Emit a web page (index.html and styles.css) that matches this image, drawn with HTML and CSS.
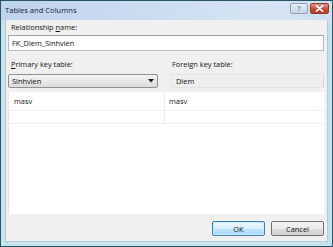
FILE: index.html
```html
<!DOCTYPE html>
<html>
<head>
<meta charset="utf-8">
<link rel="stylesheet" href="styles.css">
</head>
<body>
<div class="window">
  <div class="titlebar">
    <span class="title">Tables and Columns</span>
    <div class="caption-btns">
      <span class="cbtn help">?</span>
      <span class="cbtn close"><svg width="9" height="7" viewBox="0 0 9 7"><path d="M1.5 0.8 L7.5 6.2 M7.5 0.8 L1.5 6.2" stroke="#fff" stroke-width="1.7" stroke-linecap="round"/></svg></span>
    </div>
  </div>
  <div class="client">
    <div class="label">Relationship <u>n</u>ame:</div>
    <div class="textbox">FK_Diem_Sinhvien</div>
    <div class="pair">
      <div class="col">
        <div class="label"><u>P</u>rimary key table:</div>
        <div class="combo"><span>Sinhvien</span><svg width="6" height="4" viewBox="0 0 6 4"><path d="M0 0 H6 L3 3.5 Z" fill="#1a1a1a"/></svg></div>
      </div>
      <div class="col right">
        <div class="label">Foreign key table:</div>
        <div class="readonly">Diem</div>
      </div>
    </div>
    <div class="grid">
      <div class="row">
        <div class="cell left">masv</div>
        <div class="cell">masv</div>
      </div>
      <div class="row empty">
        <div class="cell left"></div>
        <div class="cell"></div>
      </div>
    </div>
    <div class="buttons">
      <span class="btn default">OK</span>
      <span class="btn">Cancel</span>
    </div>
  </div>
</div>
</body>
</html>
```
FILE: styles.css
```css
html, body {
  margin: 0;
  padding: 0;
  background: #ffffff;
}
body {
  font-family: "Open Sans", "Noto Sans", sans-serif;
  font-size: 7.4px;
  color: #111111;
}
.window {
  width: 333px;
  height: 247px;
  box-sizing: border-box;
  border: 1px solid #2a5563;
  background: linear-gradient(to bottom, #c2d6ee 0px, #d3e2f3 20px, #c4e3ef 21px, #c4e3ef 100%);
  display: flex;
  flex-direction: column;
}
.titlebar {
  height: 19px;
  display: flex;
  align-items: center;
  justify-content: space-between;
  padding: 0 3px 0 4px;
  background: linear-gradient(to right, #bed3ed, #d6e4f4 80%, #cfdff2);
}
.title {
  color: #10202e;
  font-size: 7.6px;
  margin-top: -1px;
}
.caption-btns {
  display: flex;
  gap: 2px;
  align-self: flex-start;
  margin-top: 2px;
}
.cbtn {
  height: 11px;
  box-sizing: border-box;
  border-radius: 2px;
  display: flex;
  align-items: center;
  justify-content: center;
}
.help {
  width: 18px;
  border: 1px solid #8aa0b8;
  background: linear-gradient(to bottom, #e8eef6, #c7d4e4);
  color: #7d8a9a;
  font-size: 7px;
  font-weight: bold;
}
.close {
  width: 19px;
  border: 1px solid #8d3a2f;
  background: linear-gradient(to bottom, #e49a8a, #c9503c 50%, #b83a28);
}
.client {
  flex: 1;
  margin: 0 4px 4px 4px;
  background: #f0f0f0;
  border: 1px solid #b7c8d6;
  border-top: none;
  padding: 2px 3px 5px 2px;
  display: flex;
  flex-direction: column;
}
.label {
  height: 11px;
  line-height: 11px;
  padding-left: 3px;
}
.textbox {
  margin-top: 2px;
  height: 16px;
  box-sizing: border-box;
  border: 1px solid #b5b9c0;
  border-top-color: #9ea3ab;
  background: #ffffff;
  line-height: 14px;
  padding-left: 3px;
}
.pair {
  display: flex;
  margin-top: 8px;
}
.col {
  width: 150px;
  display: flex;
  flex-direction: column;
}
.col.right {
  flex: 1;
  width: auto;
  margin-left: 13px;
}
.col.right .label {
  padding-left: 1px;
}
.combo {
  margin-top: 4px;
  height: 14px;
  box-sizing: border-box;
  border: 1px solid #8e8f8f;
  border-radius: 2px;
  background: linear-gradient(to bottom, #f4f4f4, #e8e8e8 50%, #dcdcdc);
  display: flex;
  align-items: center;
  justify-content: space-between;
  padding: 0 3px 0 3px;
}
.readonly {
  margin-top: 4px;
  height: 14px;
  box-sizing: border-box;
  border: 1px solid #e3e3e3;
  border-right-color: #d8d8d8;
  background: #efefef;
  line-height: 12px;
  padding-left: 4px;
}
.grid {
  margin-top: 4px;
  height: 122px;
  background: #ffffff;
  border-left: 1px solid #e6e6e6;
  display: flex;
  flex-direction: column;
}
.row {
  display: flex;
  height: 18px;
  border-bottom: 1px solid #f0f0f0;
}
.row.empty {
  height: 12px;
}
.cell {
  flex: 1;
  line-height: 18px;
  padding-left: 4px;
}
.cell.left {
  flex: 0 0 150px;
  padding-left: 5px;
  border-right: 1px solid #ececec;
}
.buttons {
  margin-top: auto;
  display: flex;
  justify-content: flex-end;
  gap: 6px;
}
.btn {
  width: 53px;
  height: 15px;
  box-sizing: border-box;
  border: 1px solid #707070;
  border-radius: 2px;
  background: linear-gradient(to bottom, #f3f3f3, #ebebeb 50%, #dcdcdc 51%, #d2d2d2);
  display: flex;
  align-items: center;
  justify-content: center;
}
.btn.default {
  border-color: #3c7fb1;
  background: linear-gradient(to bottom, #eaf6fd, #d9f0fc 50%, #bee6fd 51%, #a7d9f5);
  box-shadow: inset 0 0 0 1px #cdeaf9;
}
```
